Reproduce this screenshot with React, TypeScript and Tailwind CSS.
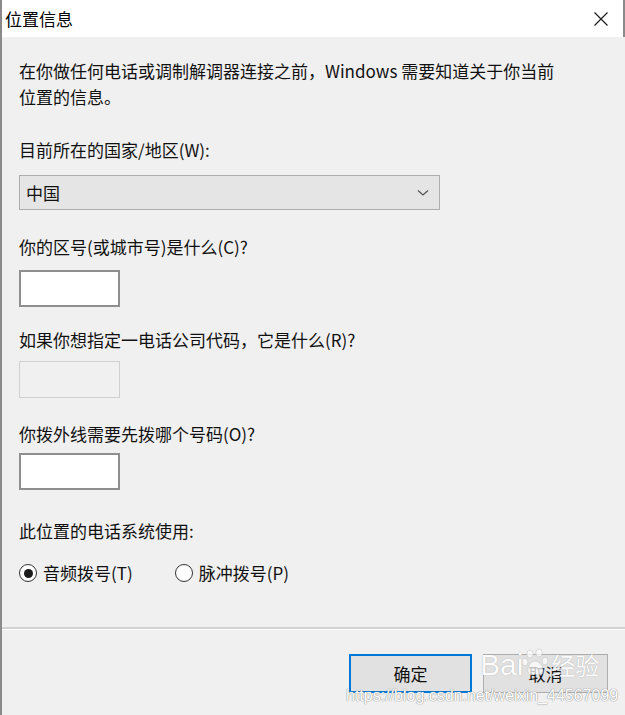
import type { ReactNode } from "react";

const font = "[font-family:'Noto_Sans_CJK_SC','Microsoft_YaHei',sans-serif]";

function Label({ children, className = "" }: { children: ReactNode; className?: string }) {
  return <div className={`text-[17px] leading-[20px] text-[#111] ${className}`}>{children}</div>;
}

function Radio({ checked, label }: { checked?: boolean; label: string }) {
  return (
    <div className="flex items-center gap-[6px]">
      <span className="flex h-[18px] w-[18px] items-center justify-center rounded-full border border-[#333] bg-white">
        {checked ? <span className="h-[9px] w-[9px] rounded-full bg-[#1b1b1b]" /> : null}
      </span>
      <span className="text-[17px] leading-[20px] text-[#111]">{label}</span>
    </div>
  );
}

function Paw() {
  return (
    <svg width="30" height="30" viewBox="0 0 30 30" className="opacity-80">
      <g fill="#ffffff" stroke="#c8c8c8" strokeWidth="0.8">
        <ellipse cx="9" cy="6" rx="3.2" ry="4" />
        <ellipse cx="18" cy="5" rx="3.2" ry="4" />
        <ellipse cx="4" cy="14" rx="3" ry="3.8" />
        <ellipse cx="24" cy="13" rx="3" ry="3.8" />
        <path d="M14 13 C9 13 6 20 7 24 C8 28 12 27 14 26 C16 27 21 28 22 24 C23 20 19 13 14 13 Z" />
      </g>
    </svg>
  );
}

export default function App() {
  return (
    <div className={`relative h-[715px] w-[625px] overflow-hidden border-l-2 border-[#8a8a8a] bg-[#f0f0f0] ${font}`}>
      <div className="flex h-[37px] items-center justify-between border-r-2 border-[#8a8a8a] bg-white pl-[3px] pr-[14px]">
        <span className="text-[17px] text-black">位置信息</span>
        <svg width="16" height="16" viewBox="0 0 16 16">
          <path d="M1.5 1.5 L14.5 14.5 M14.5 1.5 L1.5 14.5" stroke="#222" strokeWidth="1.3" />
        </svg>
      </div>

      <div className="flex h-[678px] flex-col">
        <div className="px-[17px]">
          <p className="mt-[21px] text-[17px] leading-[26px] text-[#111]">
            在你做任何电话或调制解调器连接之前，Windows 需要知道关于你当前
            <br />
            位置的信息。
          </p>

          <Label className="mt-[30px]">目前所在的国家/地区(W):</Label>
          <div className="mt-[15px] flex h-[35px] w-[421px] items-center justify-between border border-[#adadad] bg-[#e5e5e5] pl-[6px] pr-[10px]">
            <span className="text-[17px] text-[#111]">中国</span>
            <svg width="12" height="8" viewBox="0 0 12 8">
              <path d="M1 1.5 L6 6 L11 1.5" fill="none" stroke="#555" strokeWidth="1.3" />
            </svg>
          </div>

          <Label className="mt-[27px]">你的区号(或城市号)是什么(C)?</Label>
          <div className="mt-[13px] h-[37px] w-[101px] border-2 border-[#8f8f8f] bg-white" />

          <Label className="mt-[23px]">如果你想指定一电话公司代码，它是什么(R)?</Label>
          <div className="mt-[11px] h-[37px] w-[101px] border border-[#d0d0d0] bg-[#f0f0f0]" />

          <Label className="mt-[26px]">你拨外线需要先拨哪个号码(O)?</Label>
          <div className="mt-[9px] h-[37px] w-[101px] border-2 border-[#8f8f8f] bg-white" />

          <Label className="mt-[31px]">此位置的电话系统使用:</Label>
          <div className="mt-[22px] flex items-center gap-[42px]">
            <Radio checked label="音频拨号(T)" />
            <Radio label="脉冲拨号(P)" />
          </div>
        </div>

        <div className="mt-[44px] border-t-2 border-[#d2d2d2] border-b border-b-white" />

        <div className="mt-[24px] flex justify-end gap-[11px] pr-[17px]">
          <button className="flex h-[39px] w-[123px] items-center justify-center border-2 border-[#0078d7] bg-[#e1e1e1] text-[17px] text-[#111]">
            确定
          </button>
          <button className="flex h-[39px] w-[125px] items-center justify-center border border-[#adadad] bg-[#e1e1e1] text-[17px] text-[#111]">
            取消
          </button>
        </div>
      </div>

      <div className="absolute left-[478px] top-[648px] flex items-end opacity-90">
        <span className="text-[30px] leading-[34px] text-white [font-family:'Liberation_Sans',sans-serif] [text-shadow:0_0_1px_#9a9a9a]">
          Bai
        </span>
        <div className="-ml-[2px] mb-[4px]">
          <Paw />
        </div>
        <span className="mb-[2px] text-[24px] leading-[30px] text-white [text-shadow:0_0_1px_#9a9a9a]">经验</span>
      </div>
      <div className="absolute left-[344px] top-[686px] text-[16px] leading-[20px] text-white [font-family:'Liberation_Sans',sans-serif] [text-shadow:0_0_1px_#8a8a8a,0_0_1px_#8a8a8a]">
        https://blog.csdn.net/weixin_44567099
      </div>
    </div>
  );
}
